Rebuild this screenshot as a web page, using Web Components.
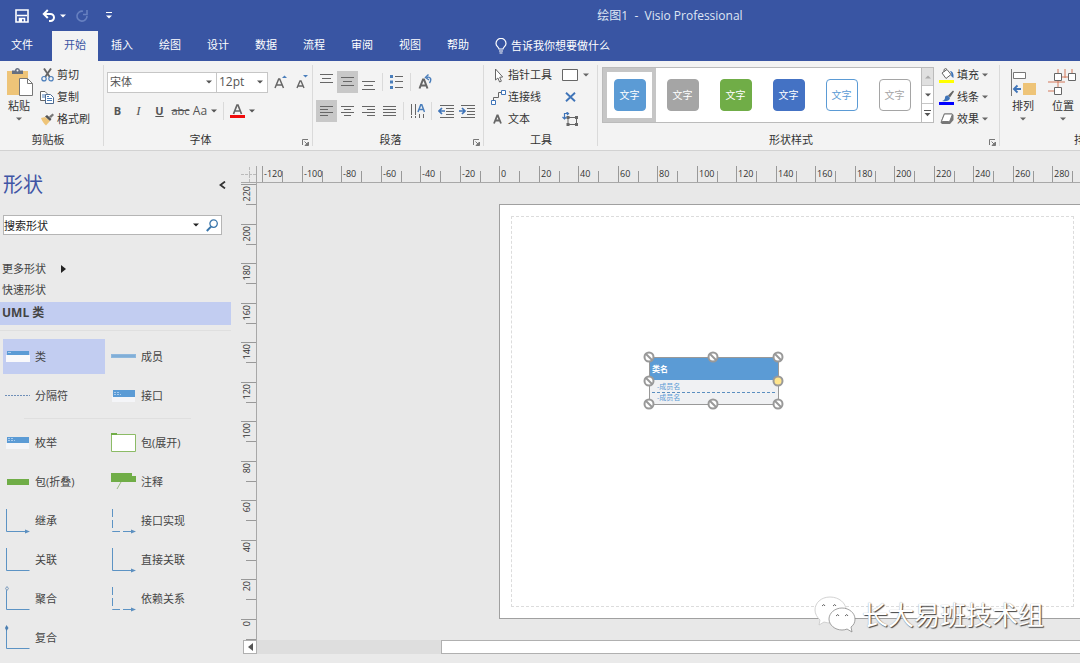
<!DOCTYPE html>
<html lang="zh-CN">
<head>
<meta charset="utf-8">
<title>绘图1 - Visio Professional</title>
<style>
  html, body { margin: 0; height: 100%; }
  body {
    font: 11px/16px "Open Sans", "Noto Sans CJK SC", sans-serif;
    color: #333; background: #eaeaea; overflow: hidden;
  }
</style>
</head>
<body>
<visio-app></visio-app>
<script>
const RESET = `
  *, *::before, *::after { box-sizing: border-box; }
  button, input, select { font: inherit; color: inherit; margin: 0; padding: 0; border: 0; background: none; outline: 0; border-radius: 0; }
  select { appearance: none; }
  a { color: inherit; text-decoration: none; }
`;

/* Base class: clones markup and styles into an open shadow root. */
class Base extends HTMLElement {
  constructor() { super(); this.attachShadow({ mode: 'open' }); }
  connectedCallback() {
    const t = document.createElement('template');
    t.innerHTML = `<style>${RESET}${this.css()}</style>${this.html()}`;
    this.shadowRoot.replaceChildren(t.content.cloneNode(true));
  }
  css() { return ''; }
  html() { return ''; }
}

const lines = (rows, c = '#666') =>
  rows.map(([a, b, y]) => `<path d="M${a} ${y}.5H${b}" stroke="${c}"/>`).join('');

/* name: [width, height, body] */
const ICONS = {
  save: [14, 14, `<path d="M1 1h12v12H1z" fill="none" stroke="#fff" stroke-width="1.6"/><path d="M2 6.500h10M4.500 13V9.500h5V13" fill="none" stroke="#fff" stroke-width="1.500"/><path d="M4 9.5h3V13H4z" fill="#fff"/>`],
  undo: [14, 13, `<path d="M2 5h6.5a3.5 3.5 0 0 1 0 7H7" fill="none" stroke="#fff" stroke-width="2"/><path d="M5.8 1 1.8 5l4 4" fill="none" stroke="#fff" stroke-width="2"/>`],
  redo: [14, 14, `<path d="M8 2.2A5 5 0 1 0 12 7" fill="none" stroke="#6780c0" stroke-width="1.6"/><path d="M8 5.5h4V1" fill="none" stroke="#6780c0" stroke-width="1.6"/>`],
  qat: [6, 7, `<path d="M0 .5h6" stroke="#fff"/><path d="M0 3.5h6L3 6.5z" fill="#fff"/>`],
  down: [6, 4, `<path d="M0 .5h6L3 3.5z" fill="currentColor"/>`],
  up: [6, 4, `<path d="M0 3.5h6L3 .5z" fill="currentColor"/>`],
  more: [7, 7, `<path d="M0 .5h7" stroke="#555"/><path d="M.5 3h6l-3 3.2z" fill="#555"/>`],
  right: [5, 8, `<path d="M0 0v8l5-4z" fill="#222"/>`],
  left: [5, 8, `<path d="M5 0v8L0 4z" fill="#555"/>`],
  collapse: [7, 8, `<path d="M6 .6 1.5 4 6 7.4" fill="none" stroke="#333" stroke-width="1.8"/>`],
  search: [12, 13, `<circle cx="7.6" cy="4.6" r="3.7" fill="#fff" stroke="#3a76ab" stroke-width="1.3"/><path d="M5 7.6.8 12" stroke="#3a76ab" stroke-width="2"/>`],
  bulb: [12, 16, `<path d="M4 11c0-2-3-2.600-3-5.600a4.800 4.800 0 0 1 10 0C11 8.400 8 9 8 11z" fill="none" stroke="#fff" stroke-width="1.200"/><path d="M4 13h4M4.500 15h3" stroke="#fff" stroke-width="1.200"/>`],
  launch: [7, 7, `<path d="M.5 6V.5H6" fill="none" stroke="#777"/><path d="m2.500 2.500 3 3M6.500 3v3.500H3z" fill="#777" stroke="#777"/>`],
  paste: [27, 29, `<path d="M1 3h21v24H1z" fill="#eec478"/><path d="M6 2.500h3a2.500 2.500 0 0 1 5 0h3V6H6z" fill="#666f80"/><circle cx="11.500" cy="2.600" r="1" fill="#f3f3f3"/><path d="M13.500 10.500h8l5 5v12h-13z" fill="#fff" stroke="#777"/><path d="M21.500 10.500v5h5" fill="none" stroke="#777"/>`],
  cut: [13, 14, `<path d="M3 .5 8.800 9M10 .5 4.200 9" stroke="#666" stroke-width="1.900"/><circle cx="3" cy="10.700" r="2.200" fill="none" stroke="#4a7ebb" stroke-width="1.200"/><circle cx="10" cy="10.700" r="2.200" fill="none" stroke="#4a7ebb" stroke-width="1.200"/>`],
  copy: [14, 13, `<path d="M.5.500h4.500l2 2v7H.5z" fill="#fff" stroke="#666"/><path d="M2 4h3M2 6h3" stroke="#4a7ebb"/><path d="M5.500 3.500h5l3 3v6h-8z" fill="#fff" stroke="#4f6b8f"/><path d="M7 7.500h5M7 9.500h5M7 5.500h2" stroke="#4a7ebb"/>`],
  brush: [14, 13, `<path d="m1 5 4-1 5 4-4 4.500C4 11 2 8 1 5z" fill="#eec478"/><path d="m5 3.500 2-1.500 4.500 4L10 8z" fill="#555"/><path d="m9 3.500 3.500-3L14 2l-3 3z" fill="#777"/>`],
  growA: [13, 14, `<path d="M1 13 4.700 4h1L9.500 13M2.300 10h6" fill="none" stroke="#666" stroke-width="1.500"/><path d="M8 3h5l-2.500-2.600z" fill="#4a7ebb"/>`],
  shrinkA: [12, 14, `<path d="M1 13 4 6h1l3 7M2 11h5" fill="none" stroke="#666" stroke-width="1.400"/><path d="M7 0h5L9.500 2.600z" fill="#4a7ebb"/>`],
  fontColor: [15, 16, `<path d="M3.500 11 7 2h1l3.500 9M5 8h5" fill="none" stroke="#666" stroke-width="1.700"/><path d="M0 12h15v3H0z" fill="#f00b0b"/>`],
  vTop: [13, 18, lines([[0, 13, 1], [2, 11, 5], [0, 13, 9]])],
  vMid: [13, 12, lines([[0, 13, 1], [2, 11, 5], [0, 13, 9]])],
  vBot: [13, 18, lines([[0, 13, 8], [2, 11, 12], [0, 13, 16]])],
  aLeft: [13, 12, lines([[0, 13, 1], [0, 8, 4], [0, 13, 7], [0, 8, 10]])],
  aCenter: [13, 12, lines([[0, 13, 1], [3, 10, 4], [0, 13, 7], [3, 10, 10]])],
  aRight: [13, 12, lines([[0, 13, 1], [5, 13, 4], [0, 13, 7], [5, 13, 10]])],
  aJust: [13, 12, lines([[0, 13, 1], [0, 13, 4], [0, 13, 7], [0, 13, 10]])],
  bullets: [13, 14, `<path d="M0 0h3v3H0zM0 5.500h3v3H0zM0 11h3v3H0z" fill="#4a7ebb"/>` + lines([[5, 13, 1], [5, 13, 6], [5, 13, 12]])],
  rotateA: [14, 16, `<path d="M1.500 14.500 5 5.500h1l3.500 9M3 11.500h5" fill="none" stroke="#666" stroke-width="2"/><path d="M8.500 3.500c4-1.500 5.500 2 3 5.500" fill="none" stroke="#4a7ebb" stroke-width="1.400"/><path d="M10.500.500 7.500 3.500l3.500 2.500" fill="none" stroke="#4a7ebb" stroke-width="1.400"/>`],
  vertText: [15, 15, `<path d="M1.500 0v14M5.500 0v14M9.500 10v4M13.500 10v4" stroke="#666" stroke-dasharray="11 1"/><path d="M8 8 11 0h.5l3 8M9 5.500h4.500" fill="none" stroke="#4a7ebb" stroke-width="1.500"/>`],
  outdent: [16, 13, lines([[2, 16, 0], [8, 16, 3], [8, 16, 6], [8, 16, 9], [2, 16, 12]]) + `<path d="M7 6H1M4 3 1 6l3 3" fill="none" stroke="#3f74b8" stroke-width="1.700"/>`],
  indent: [16, 13, lines([[2, 16, 0], [8, 16, 3], [8, 16, 6], [8, 16, 9], [2, 16, 12]]) + `<path d="M0 6h6M3 3l3 3-3 3" fill="none" stroke="#3f74b8" stroke-width="1.700"/>`],
  pointer: [14, 15, `<path d="M4.500 1v11l2.400-2 1.700 4 1.800-.8L8.700 9.300l3-.3z" fill="#fff" stroke="#666"/>`],
  connector: [15, 15, `<path d="M.5 10.500h4v4h-4zM10.500.500h4v4h-4z" fill="#fff" stroke="#3f74b8"/><path d="M2.500 10V7.500h5v-5H10" fill="none" stroke="#666"/>`],
  textA: [14, 12, `<path d="M3 10.500 6.200 2.500h.6l3.200 8M4.500 7.500h4" fill="none" stroke="#666" stroke-width="1.800"/>`],
  rect: [16, 12, `<path d="M.5.500h15v11H.5z" fill="#fff" stroke="#666"/>`],
  cross: [11, 10, `<path d="m1 .8 9 8.400M10 .8 1 9.200" stroke="#3f74b8" stroke-width="1.900"/>`],
  connPoint: [16, 14, `<path d="M6 5.500h8.500v7H6z" fill="none" stroke="#666"/><path d="M4.500 4h3v3h-3zM13 4h3v3h-3zM4.500 11h3v3h-3zM13 11h3v3h-3z" fill="#666"/><path d="M6 1.500H2.500V7M.5 5l2 2 2-2M4.500 0l2 1.500L5 3" fill="none" stroke="#3f74b8" stroke-width="1.200"/>`],
  fill: [16, 15, `<path d="m3 5 5-3.500 4 5-5 4z" fill="#fff" stroke="#666"/><path d="M5 4V1.500q2-2 3 0" fill="none" stroke="#666"/><path d="M11 3q4 0 3.500 7Q11 8 12.500 6z" fill="#3f74b8"/><path d="M0 12h15v3H0z" fill="#ff0"/>`],
  line: [16, 15, `<path d="m14 .5-5 5 2 2 4-6z" fill="#666"/><path d="M3 11q3-1 3-3.500t3-2L11 8q-1 4-8 3z" fill="#3f74b8"/><path d="M0 12h15v3H0z" fill="#00f"/>`],
  effect: [15, 12, `<path d="M4 .5h8l1.500 1.500v5L10 11H2L.5 9.500z" fill="#777"/><path d="M5 1h6.500q1 0 .7 1L10 7.500q-.3 1-1.300 1H2.500q-1 0-.7-1L4 2q.2-1 1-1z" fill="#fff" stroke="#777"/>`],
  arrange: [27, 27, `<path d="M1.500 0v27" stroke="#777"/><path d="M3.500 3.500h12v6h-12z" fill="#fff" stroke="#777"/><path d="M13 14h13v12H13z" fill="#eec478"/><path d="M11 20H4M7.500 16.500 4 20l3.500 3.500" fill="none" stroke="#3f74b8" stroke-width="1.900"/>`],
  position: [30, 27, `<path d="M10 0v4M17 0v9M24 0v4M14 8h6M0 13h17M10 12v6M0 22h6" stroke="#d3795a"/><path d="M6.500 4.500h7v7h-7zM20.500 4.500h7v7h-7zM6.500 18.500h7v7h-7z" fill="#fff" stroke="#666"/>`],
  /* stencil thumbnails */
  sClass: [26, 26, `<path d="M1 11h24v7H1z" fill="#f9f9fb"/><path d="M2 7h22v4H2z" fill="#5b9bd5"/><path d="M3 8.500h3" stroke="#a9cbed"/>`],
  sMember: [26, 26, `<path d="M0 10h25v4H0z" fill="#8fb8dd"/><path d="M1 12h23" stroke="#73a5d2"/>`],
  sSep: [26, 26, `<path d="M0 12.500h25" stroke="#6f8fb8" stroke-dasharray="2 1"/>`],
  sIface: [26, 26, `<path d="M1 13h23v6H1z" fill="#f4f5f8"/><path d="M2 7h22v7H2z" fill="#5b9bd5"/><path d="M3 9.500h5M3 11.500h7" stroke="#a9cbed" stroke-dasharray="2 1"/>`],
  sEnum: [26, 26, `<path d="M1 13h23v6H1z" fill="#f4f5f8"/><path d="M2 7h22v6H2z" fill="#5b9bd5"/><path d="M3 8.500h5M3 10.500h7" stroke="#a9cbed" stroke-dasharray="2 1"/>`],
  sPkgOpen: [26, 26, `<path d="M.5 4.500h24v17H.5z" fill="#fff" stroke="#8cbb66"/><path d="M0 3h6v2H0z" fill="#70ad47"/>`],
  sPkg: [26, 26, `<path d="M2 10h22v6H2z" fill="#70ad47"/>`],
  sNote: [26, 26, `<path d="M0 4h21v3h4v6H0z" fill="#70ad47"/><path d="m10 13-4 7" stroke="#9bbd84"/>`],
  sInherit: [26, 26, `<path d="M1.500 1v22.500h20" fill="none" stroke="#5c93c4"/><path d="m20 21.500 5 2-5 2z" fill="#5c8fbf"/>`],
  sRealize: [26, 26, `<path d="M1.500 1v22.500h20" fill="none" stroke="#5c93c4" stroke-dasharray="8 3"/><path d="m20 21.500 5 2-5 2z" fill="#5c8fbf"/>`],
  sAssoc: [26, 26, `<path d="M1.500 1v22.500h23" fill="none" stroke="#5c93c4"/>`],
  sAggr: [26, 26, `<path d="M1.500 4v19.500h23" fill="none" stroke="#5c93c4"/><path d="m2 .5 1.500 2L2 4.500.5 2.500z" fill="#ddd" stroke="#7f9fc0"/>`],
  sComp: [26, 26, `<path d="M1.500 2v21.500h23" fill="none" stroke="#5c93c4"/><path d="m1.500 0 2 3-2 3L0 3z" fill="#4b7fb2"/>`],
  wechat: [42, 37, `<g fill="#fff" stroke="#8a8a8a" stroke-width=".8"><path d="M16 1C7 1 1 7 1 14c0 4 2 7 5 10l-1 5 5-3q3 1 7 1c8 0 15-6 15-13S25 1 16 1z" stroke="#c8c8c8"/><path d="M28 12c-7 0-13 5-13 11s6 11 13 11q3 0 5-1l5 3-1-5c3-2 4-5 4-8 0-6-6-11-13-11z"/></g><path d="M8 10q2-3 3 0M19 10q2-3 3 0M22 20q2-3 3 0M31 20q2-3 3 0" fill="none" stroke="#666"/>`],
};

class VIcon extends Base {
  css() { return ':host{display:inline-flex;flex:none} svg{display:block}'; }
  html() {
    const [w, h, body] = ICONS[this.getAttribute('name')];
    return `<svg width="${w}" height="${h}" viewBox="0 0 ${w} ${h}" aria-hidden="true">${body}</svg>`;
  }
}

class TitleBar extends Base {
  css() { return `
    :host{display:grid;grid-template-columns:1fr auto 1fr;align-items:center;height:31px;background:#3955a3;color:#dfe5f4}
    .qat{display:flex;align-items:center;padding:0 15px}
    button{display:flex;align-items:center}
    .u{margin-left:13px;gap:4px;color:#fff}.r{margin-left:9px}.q{margin-left:17px}
    h1{font:inherit;font-size:12px;margin:0;white-space:pre;padding-left:260px;line-height:28px}`; }
  html() { return `
    <div class="qat"><button aria-label="保存"><v-icon name="save"></v-icon></button>
    <button class="u" aria-label="撤消"><v-icon name="undo"></v-icon><v-icon name="down"></v-icon></button>
    <button class="r" aria-label="重复"><v-icon name="redo"></v-icon></button>
    <button class="q" aria-label="自定义"><v-icon name="qat"></v-icon></button></div>
    <h1>绘图1  -  Visio Professional</h1>`; }
}

class RibbonTabs extends Base {
  css() { return `
    :host{display:flex;height:30px;background:#3955a3;color:#fff}
    nav{display:flex}
    a{width:48px;display:flex;align-items:center;justify-content:center;padding-bottom:2px}
    a.file{width:44px;margin-right:8px}
    a.on{width:46px;background:#f3f3f3;color:#3955a3}
    button{display:flex;align-items:center;gap:4px;margin-left:13px}`; }
  html() {
    const tabs = ['文件', '开始', '插入', '绘图', '设计', '数据', '流程', '审阅', '视图', '帮助'];
    return `<nav>${tabs.map((t, i) => `<a href="#" class="${['file', 'on'][i] || ''}">${t}</a>`).join('')}</nav>
    <button><v-icon name="bulb"></v-icon><span>告诉我你想要做什么</span></button>`;
  }
}

class RibbonGroup extends Base {
  css() { return `
    :host{display:grid;grid-template-rows:66px 20px;flex:none;position:relative;padding-top:3px}
    :host::after{content:"";position:absolute;right:0;top:4px;bottom:4px;width:1px;background:#dadada}
    .body{display:flex;min-width:0}
    .foot{display:grid;grid-template-columns:1fr;align-items:center;text-align:center}
    :host([launcher]) .foot{grid-template-columns:1fr 16px}
    :host([label="剪贴板"]) .foot{padding-right:8px}
    button{padding-top:4px}`; }
  html() { return `<div class="body"><slot></slot></div>
    <div class="foot"><span>${this.getAttribute('label')}</span>${this.hasAttribute('launcher') ? `<button aria-label="${this.getAttribute('label')}设置"><v-icon name="launch"></v-icon></button>` : ''}</div>`; }
}

/* Icon and caption side by side, with an optional drop-down arrow. */
class ToolButton extends Base {
  css() { return `
    :host{display:block;height:22px}
    button{display:flex;align-items:center;height:22px;white-space:nowrap}
    .i{display:flex;justify-content:center;width:18px;margin-right:1px}
    .d{margin-left:3px;color:#666}`; }
  html() { return `<button ${this.hasAttribute('tip') ? `aria-label="${this.getAttribute('tip')}"` : ''}><span class="i"><v-icon name="${this.getAttribute('icon')}"></v-icon></span><slot></slot>${this.hasAttribute('menu') ? '<v-icon class="d" name="down"></v-icon>' : ''}</button>`; }
}

/* Large icon above its caption. */
class BigButton extends Base {
  css() { return `
    :host{display:block}
    button{display:grid;grid-template-rows:31px 16px 10px;justify-items:center;align-items:center;width:100%;padding-top:3px;color:#333}
    .d{color:#666}`; }
  html() { return `<button><v-icon name="${this.getAttribute('icon')}"></v-icon><span><slot></slot></span><v-icon class="d" name="down"></v-icon></button>`; }
}

class VisioRibbon extends Base {
  css() { return `
    :host{display:flex;height:90px;overflow:hidden;background:#f3f3f3;border-bottom:1px solid #d2d2d2}
    .clip{width:104px}.font{width:209px}.para{width:171px}.tools{width:114px}.styles{width:402px}.arr{width:170px}
    .col{display:flex;flex-direction:column}
    .rows{display:grid;grid-template-rows:22px 22px;row-gap:7px;padding:7px 0 0 3px}
    .row{display:flex;align-items:center}
    .row button{display:flex;align-items:center;justify-content:center;width:21px;height:22px;flex:none;color:#555}
    .row button.on{background:#c8c8c8}
    .row button.wide{width:28px;gap:4px}
    .sep{width:1px;height:18px;background:#dadada;margin:0 4px}
    .sep.n{margin:0 3px}
    .combo{display:grid;height:21px;align-items:center;border:1px solid #c6c6c6;background:#fff;margin-right:-1px}
    .combo>*{grid-area:1/1}
    .combo select{width:100%;padding-left:2px;height:19px;color:#555}
    .combo v-icon{justify-self:end;margin-right:4px;color:#555;pointer-events:none}
    .f{width:110px}.s{width:52px;font-size:12px}
    .gallery{display:flex;height:56px;margin:3px 4px 0;border:1px solid #bbb;background:#fff}
    .gallery button.cell{display:grid;place-items:center;width:53px;height:54px;border:4px solid transparent}
    .gallery button.sel{border-color:#c6c6c6}
    .sw{display:grid;place-items:center;width:32px;height:32px;border-radius:4px;border:1px solid var(--b);background:var(--f);color:var(--t);font-size:10px}
    .spin{display:grid;grid-template-rows:repeat(3,18px);width:12px;border-left:1px solid #bbb}
    .spin button{display:grid;place-items:center;color:#555;border-bottom:1px solid #c6c6c6}
    .spin button:first-child{background:#e0e0e0;color:#aaa}.spin button:last-child{border:0}`; }
  html() {
    const b = (icon, tip, cls = '') => `<button class="${cls}" aria-label="${tip}"><v-icon name="${icon}"></v-icon></button>`;
    const sw = [['#5b9bd5', '#5b9bd5', '#fff'], ['#a5a5a5', '#a5a5a5', '#fff'], ['#70ad47', '#70ad47', '#fff'], ['#4472c4', '#4472c4', '#fff'], ['#5b9bd5', '#fff', '#5b9bd5'], ['#a5a5a5', '#fff', '#a5a5a5']];
    return `
    <ribbon-group class="clip" label="剪贴板">
      <big-button icon="paste" style="width:38px"><span>粘贴</span></big-button>
      <div class="col"><tool-button icon="cut">剪切</tool-button><tool-button icon="copy">复制</tool-button><tool-button icon="brush">格式刷</tool-button></div>
    </ribbon-group>
    <ribbon-group class="font" label="字体" launcher>
      <div class="rows">
        <div class="row"><div class="combo f"><select aria-label="字体"><option>宋体</option></select><v-icon name="down"></v-icon></div>
          <div class="combo s"><select aria-label="字号"><option>12pt</option></select><v-icon name="down"></v-icon></div>
          <span style="width:3px"></span>${b('growA', '增大字号')}${b('shrinkA', '减小字号')}</div>
        <div class="row"><button><b>B</b></button><button style="font-family:'Liberation Serif',serif;font-size:13px"><i>I</i></button><button><b><u>U</u></b></button><button><s>abc</s></button>
          <button class="wide" style="font-size:12px">Aa<v-icon name="down"></v-icon></button><span class="sep"></span>
          <button class="wide" aria-label="字体颜色"><v-icon name="fontColor"></v-icon><v-icon name="down"></v-icon></button></div>
      </div>
    </ribbon-group>
    <ribbon-group class="para" label="段落" launcher>
      <div class="rows">
        <div class="row">${b('vTop', '顶端对齐')}${b('vMid', '中部对齐', 'on')}${b('vBot', '底端对齐')}<span class="sep n"></span>${b('bullets', '项目符号')}<span class="sep n"></span>${b('rotateA', '旋转文字')}</div>
        <div class="row">${b('aLeft', '左对齐', 'on')}${b('aCenter', '居中')}${b('aRight', '右对齐')}${b('aJust', '两端对齐')}<span class="sep n"></span>${b('vertText', '文字方向')}<span class="sep n"></span>${b('outdent', '减少缩进')}${b('indent', '增加缩进')}</div>
      </div>
    </ribbon-group>
    <ribbon-group class="tools" label="工具">
      <div class="col" style="width:72px;padding-left:5px"><tool-button icon="pointer">指针工具</tool-button><tool-button icon="connector">连接线</tool-button><tool-button icon="textA">文本</tool-button></div>
      <div class="col" style="padding-left:5px"><tool-button icon="rect" tip="矩形" menu></tool-button><tool-button icon="cross" tip="删除"></tool-button><tool-button icon="connPoint" tip="连接点"></tool-button></div>
    </ribbon-group>
    <ribbon-group class="styles" label="形状样式" launcher>
      <div class="gallery">${sw.map(([x, f, t], i) => `<button class="cell ${i ? '' : 'sel'}"><span class="sw" style="--b:${x};--f:${f};--t:${t}">文字</span></button>`).join('')}
        <div class="spin"><button aria-label="上"><v-icon name="up"></v-icon></button><button aria-label="下"><v-icon name="down"></v-icon></button><button aria-label="其他"><v-icon name="more"></v-icon></button></div></div>
      <div class="col"><tool-button icon="fill" menu>填充</tool-button><tool-button icon="line" menu>线条</tool-button><tool-button icon="effect" menu>效果</tool-button></div>
    </ribbon-group>
    <ribbon-group class="arr" label="排列">
      <big-button icon="arrange" style="width:46px">排列</big-button><big-button icon="position" style="width:34px">位置</big-button>
    </ribbon-group>`;
  }
}

class StencilItem extends Base {
  css() { return `
    :host{display:block}
    button{display:flex;align-items:center;gap:4px;width:102px;height:35px;padding-left:2px;white-space:nowrap;text-align:left}
    :host([selected]) button{background:#c2cdf1}`; }
  html() { return `<button><v-icon name="${this.getAttribute('icon')}"></v-icon><span><slot></slot></span></button>`; }
}

class ShapesPanel extends Base {
  css() { return `
    :host{display:block;width:231px;color:#444}
    header{display:flex;align-items:center;justify-content:space-between;height:64px;padding:4px 5px 0 3px}
    h2{margin:0;font-size:20px;line-height:28px;font-weight:400;color:#3f55a5}
    form{display:flex;align-items:center;width:219px;height:20px;margin:0 0 0 3px;border:1px solid #b5b5b5;background:#fff;color:#222}
    input{flex:1;min-width:0;height:18px}
    form button{display:grid;place-items:center;width:18px;height:18px;margin-left:4px}
    .links{padding:23px 0 2px 2px}
    .links a{display:flex;align-items:center;gap:15px;height:21px}
    h3{margin:0;height:23px;padding-left:2px;font-size:12px;line-height:22px;background:#c2cdf1}
    .g{display:grid;grid-template-columns:106px 106px;row-gap:4px;padding-left:3px}
    hr{border:0;border-top:1px solid #dfdfdf;height:0}
    .a{margin:5px 0 8px}.b{margin:5px 40px 6px 24px}`; }
  html() {
    const it = ([i, t]) => `<stencil-item icon="${i}" ${i === 'sClass' ? 'selected' : ''}>${t}</stencil-item>`;
    return `
    <header><h2>形状</h2><button aria-label="折叠"><v-icon name="collapse"></v-icon></button></header>
    <form><input aria-label="搜索形状" value="搜索形状"><v-icon name="down"></v-icon><button type="button" aria-label="搜索"><v-icon name="search"></v-icon></button></form>
    <div class="links"><a href="#">更多形状<v-icon name="right"></v-icon></a><a href="#">快速形状</a></div>
    <h3>UML 类</h3><hr class="a">
    <div class="g">${[['sClass', '类'], ['sMember', '成员'], ['sSep', '分隔符'], ['sIface', '接口']].map(it).join('')}</div><hr class="b">
    <div class="g">${[['sEnum', '枚举'], ['sPkgOpen', '包(展开)'], ['sPkg', '包(折叠)'], ['sNote', '注释'], ['sInherit', '继承'], ['sRealize', '接口实现'], ['sAssoc', '关联'], ['sInherit', '直接关联'], ['sAggr', '聚合'], ['sRealize', '依赖关系'], ['sComp', '复合']].map(it).join('')}</div>`;
  }
}

/* Scale bar: a long mark and a number every 20 units, a short mark between. */
class ScaleRuler extends Base {
  css() { return `:host{display:block;overflow:hidden;font-size:9px}svg{display:block}text{fill:#333}
    :host([axis=x]){border-bottom:1px solid #a8a8a8}:host([axis=y]){border-right:1px solid #a8a8a8}`; }
  connectedCallback() {
    super.connectedCallback();
    this.draw();
    window.addEventListener('load', () => this.draw());
    window.addEventListener('resize', () => this.draw());
  }
  draw() {
    const x = this.getAttribute('axis') === 'x';
    const len = x ? this.clientWidth : this.clientHeight;
    const from = +this.getAttribute('from'), start = +this.getAttribute('start');
    let s = '';
    for (let i = 0; ; i++) {
      const p = start + Math.round(i * 39.5);
      const v = from + (x ? 20 : -20) * i;
      if (p > len - 8 || (!x && v < 0)) break;
      s += x
        ? `<path d="M${p}.5 0V16M${p + 20}.5 5V16" stroke="#999"/><text x="${p + 2}" y="11">${v}</text>`
        : `<path d="M0 ${p}.5H15M5 ${p + 20}.5H15" stroke="#999"/><text transform="translate(9 ${p + 2}) rotate(-90)" text-anchor="end">${v}</text>`;
    }
    this.shadowRoot.querySelector('svg')?.remove();
    const t = document.createElement('template');
    t.innerHTML = x ? `<svg width="${len}" height="16">${s}</svg>` : `<svg width="15" height="${len}">${s}</svg>`;
    this.shadowRoot.append(t.content);
  }
}

/* Selected UML class with its handles. */
class UmlClass extends Base {
  css() { return `
    :host{display:block;width:130px;color:#5b9bd5;font-size:7px;line-height:11px}
    .box{position:relative;border:1px solid #999;background:#f0f1f3}
    h4{margin:0;height:22px;padding-left:2px;font-size:8px;line-height:22px;background:#5b9bd5;color:#fff}
    p{margin:0 3px 0 2px;padding-left:5px;height:12px;line-height:13px}
    p+p{border-top:1px dashed #5b8fc0;line-height:10px}
    svg{position:absolute;left:-7px;top:-7px;overflow:visible}`; }
  html() {
    const pts = [[0, 0], [64, 0], [129, 0], [0, 24], [0, 47], [64, 47], [129, 47]];
    return `<div class="box"><h4>类名</h4><p>-成员名</p><p>-成员名</p>
    <svg width="142" height="60" aria-hidden="true"><g transform="translate(6 6)" stroke="#999" stroke-width="2" fill="#fff">
    ${pts.map(([x, y]) => `<circle cx="${x}" cy="${y}" r="4.500"/><path d="m${x - 3} ${y - 3} 6 6"/>`).join('')}
    <circle cx="129" cy="24" r="4.500" fill="#ffe58c"/></g></svg></div>`;
  }
}

class DrawingArea extends Base {
  css() { return `
    :host{display:grid;grid-template-columns:16px 1fr;grid-template-rows:17px 1fr 14px;min-width:0;padding:15px 0 9px;min-height:0}
    .corner{border-right:1px solid #a8a8a8;border-bottom:1px solid #a8a8a8}
    .corner svg{display:block}
    .view{position:relative;overflow:hidden;background:#e8e8e8}
    .page{position:absolute;left:242px;top:21px;width:587px;height:415px;padding:11px;background:#fff;border:1px solid #a0a0a0}
    .margin{width:563px;height:391px;border:1px dashed #dcdcdc}
    uml-class{position:absolute;left:149px;top:152px}
    .mark{position:absolute;right:36px;bottom:7px;display:flex;align-items:center;gap:6px;font-size:26px;line-height:36px;color:#fff;text-shadow:1px 1px 1px #444,0 0 1px #999}
    .sb{grid-column:1/3;display:flex}
    .sb button{display:grid;place-items:center;width:14px;margin-left:2px;background:#fff;border:1px solid #b0b0b0}
    .track{flex:1;display:flex;background:#dedede}
    .thumb{flex:1;margin-left:184px;background:#fff;border:1px solid #b0b0b0;border-right:0}`; }
  html() { return `
    <div class="corner"><svg width="15" height="16"><path d="M8.500 1v15M0 8.500h15" stroke="#bbb" stroke-dasharray="3 1"/></svg></div>
    <scale-ruler axis="x" from="-120" start="5"></scale-ruler>
    <scale-ruler axis="y" from="220" start="1"></scale-ruler>
    <div class="view"><div class="page"><div class="margin"></div><uml-class></uml-class></div>
      <div class="mark"><v-icon name="wechat"></v-icon><span>长大易班技术组</span></div></div>
    <div class="sb"><button aria-label="向左滚动"><v-icon name="left"></v-icon></button><div class="track"><div class="thumb"></div></div></div>`; }
}

class VisioApp extends Base {
  css() { return `
    :host{display:grid;grid-template-rows:auto auto auto 1fr;height:100vh}
    main{display:grid;grid-template-columns:231px 1fr;column-gap:10px;min-height:0;overflow:hidden}
    visio-ribbon{min-width:0}`; }
  html() { return `<title-bar></title-bar><ribbon-tabs></ribbon-tabs><visio-ribbon></visio-ribbon>
    <main><shapes-panel></shapes-panel><drawing-area></drawing-area></main>`; }
}

Object.entries({
  'v-icon': VIcon, 'title-bar': TitleBar, 'ribbon-tabs': RibbonTabs, 'ribbon-group': RibbonGroup,
  'tool-button': ToolButton, 'big-button': BigButton, 'visio-ribbon': VisioRibbon, 'stencil-item': StencilItem,
  'shapes-panel': ShapesPanel, 'scale-ruler': ScaleRuler, 'uml-class': UmlClass, 'drawing-area': DrawingArea,
  'visio-app': VisioApp,
}).forEach(([n, c]) => customElements.define(n, c));
</script>
</body>
</html>
